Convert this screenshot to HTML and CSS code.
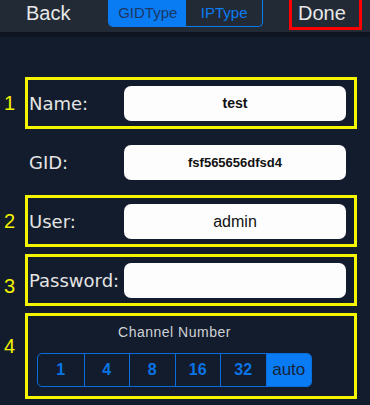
FILE: index.html
```html
<!DOCTYPE html>
<html lang="en">
<head>
    <meta charset="UTF-8">
    <meta name="viewport" content="width=device-width, initial-scale=1.0">
    <title>Add Device</title>
    <link rel="stylesheet" href="styles.css">
</head>
<body>
    <div class="topbar">
        <div class="nav-btn back">Back</div>
        <div class="type-switch">
            <div class="type-opt active">GIDType</div>
            <div class="type-opt">IPType</div>
        </div>
        <div class="done-mark">
            <div class="nav-btn">Done</div>
        </div>
    </div>

    <div class="form">
        <div class="row">
            <div class="num">1</div>
            <div class="field marked">
                <div class="label">Name:</div>
                <div class="input bold">test</div>
            </div>
        </div>
        <div class="row">
            <div class="num"></div>
            <div class="field">
                <div class="label">GID:</div>
                <div class="input bold small">fsf565656dfsd4</div>
            </div>
        </div>
        <div class="row">
            <div class="num">2</div>
            <div class="field marked">
                <div class="label">User:</div>
                <div class="input large">admin</div>
            </div>
        </div>
        <div class="row">
            <div class="num num-low">3</div>
            <div class="field marked">
                <div class="label">Password:</div>
                <div class="input"></div>
            </div>
        </div>
        <div class="row">
            <div class="num num-high">4</div>
            <div class="field marked channel">
                <div class="channel-title">Channel Number</div>
                <div class="channel-seg">
                    <div class="seg">1</div>
                    <div class="seg">4</div>
                    <div class="seg">8</div>
                    <div class="seg">16</div>
                    <div class="seg">32</div>
                    <div class="seg active">auto</div>
                </div>
            </div>
        </div>
    </div>
</body>
</html>
```

FILE: styles.css
```css
body {
    margin: 0;
    width: 370px;
    height: 405px;
    overflow: hidden;
    background-color: #131c2c;
    font-family: "Liberation Sans", Arial, sans-serif;
}
.topbar {
    display: flex;
    align-items: flex-start;
    height: 32px;
    background-color: #222a36;
    border-bottom: 5px solid #0f151e;
}
.nav-btn {
    font-size: 20px;
    line-height: 26px;
    color: #e8e8e8;
}
.back {
    margin-left: 26px;
}
.type-switch {
    display: flex;
    margin-left: 38px;
    width: 153px;
    height: 26px;
    border: 1px solid #0a7cf3;
    border-top: none;
    border-radius: 0 0 5px 5px;
    overflow: hidden;
}
.type-opt {
    flex: 1;
    text-align: center;
    font-size: 15px;
    line-height: 25px;
    color: #0a7cf3;
}
.type-opt.active {
    background-color: #0a7cf3;
    color: #1b3766;
}
.done-mark {
    margin-left: auto;
    margin-right: 8px;
    width: 73px;
    height: 30px;
    box-sizing: border-box;
    border: 3px solid #ff0000;
    border-top: none;
    padding-left: 6px;
}
.form {
    display: flex;
    flex-direction: column;
    gap: 7px;
    margin-top: 40px;
}
.row {
    display: flex;
    align-items: center;
}
.num {
    width: 19px;
    padding-right: 6px;
    text-align: center;
    font-size: 20px;
    color: #f2f200;
}
.num-low {
    margin-top: 12px;
}
.num-high {
    margin-top: -20px;
}
.field {
    display: flex;
    align-items: center;
    width: 332px;
    height: 52px;
    box-sizing: border-box;
    border: 3px solid transparent;
}
.field.marked {
    border-color: #f5f500;
}
.label {
    width: 96px;
    padding-left: 1px;
    box-sizing: border-box;
    font-family: "DejaVu Sans", sans-serif;
    font-size: 18px;
    color: #e4e4e4;
}
.input {
    width: 222px;
    height: 35px;
    border-radius: 7px;
    background-color: #fdfdfd;
    color: #111;
    font-size: 14px;
    line-height: 35px;
    text-align: center;
}
.input.bold {
    font-weight: bold;
}
.input.small {
    font-size: 13px;
}
.input.large {
    font-size: 16px;
}
.field.channel {
    flex-direction: column;
    align-items: flex-start;
    height: 86px;
    padding: 8px 0 0 9px;
}
.channel-title {
    width: 275px;
    text-align: center;
    font-size: 14px;
    line-height: 16px;
    letter-spacing: 0.5px;
    color: #cfd2d6;
}
.channel-seg {
    display: grid;
    grid-template-columns: repeat(6, 1fr);
    width: 275px;
    height: 34px;
    margin-top: 13px;
    box-sizing: border-box;
    border: 1px solid #0a6fdc;
    border-radius: 5px;
    overflow: hidden;
}
.seg {
    display: flex;
    align-items: center;
    justify-content: center;
    border-left: 1px solid #0a6fdc;
    font-size: 16px;
    font-weight: bold;
    color: #0a74e6;
}
.seg:first-child {
    border-left: none;
}
.seg.active {
    background-color: #0a7cf3;
    color: #15223a;
    font-weight: normal;
    font-size: 17px;
}
```
